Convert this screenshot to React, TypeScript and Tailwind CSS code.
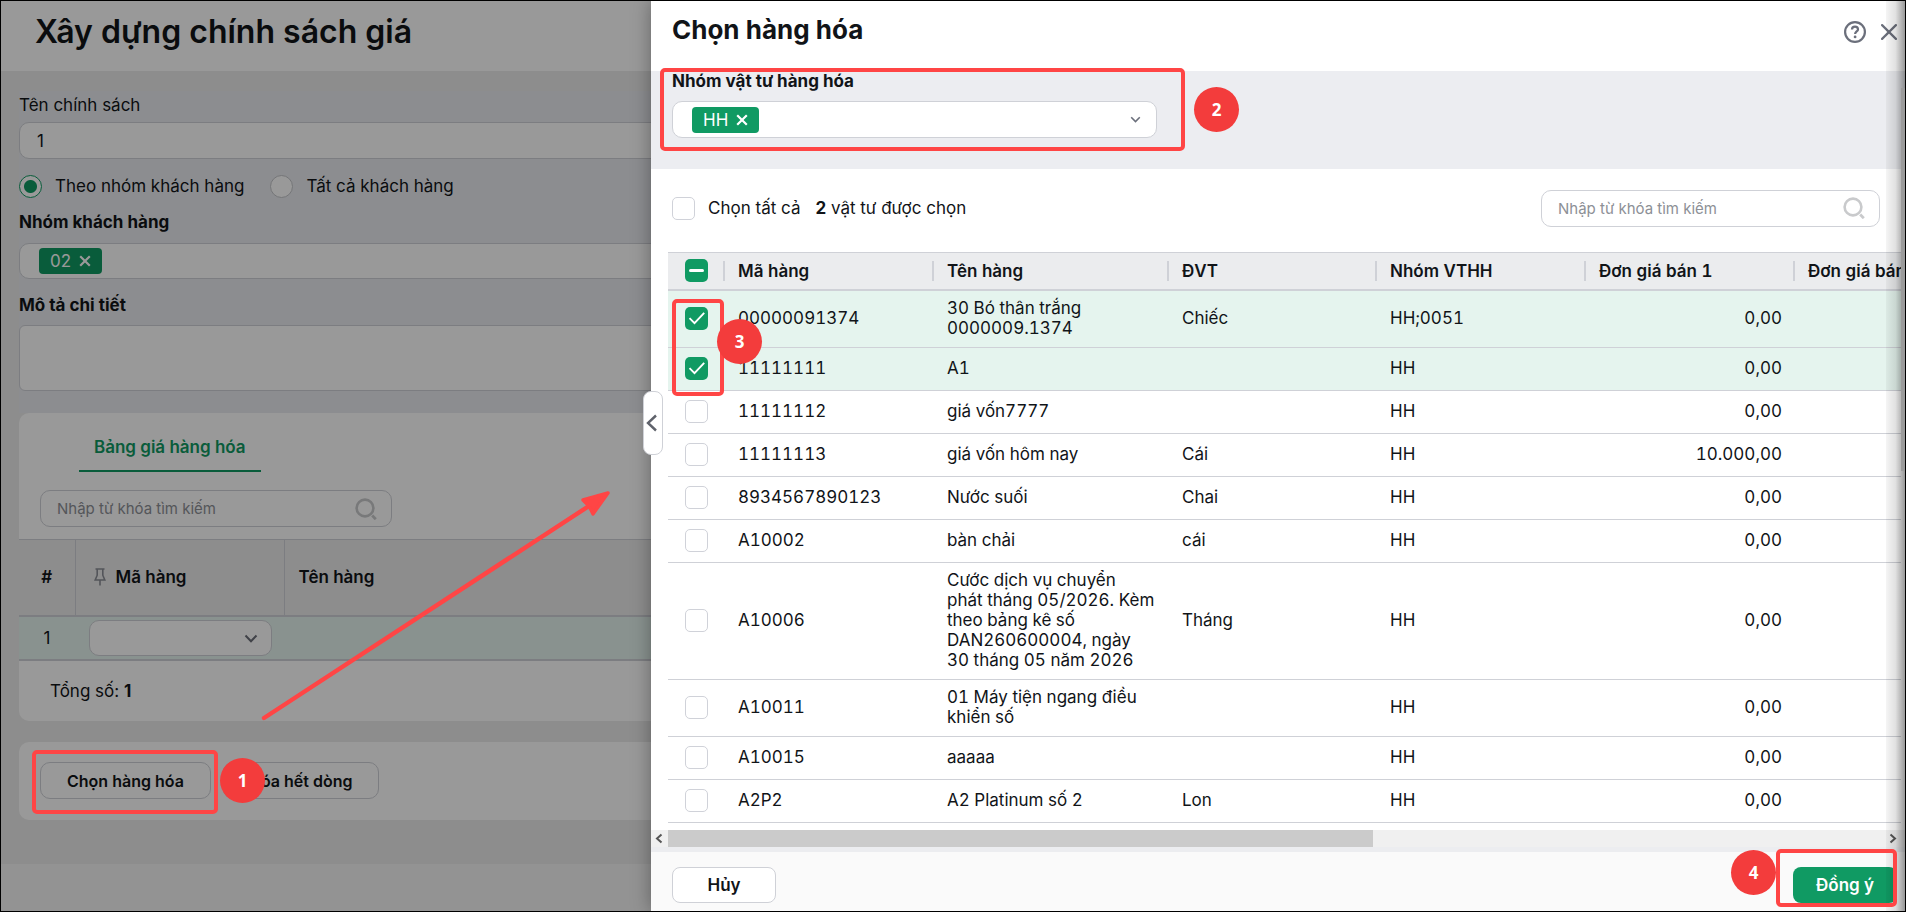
import { useState } from "react";
import type { ReactNode } from "react";
import clsx from "clsx";

type Product = {
  code: string;
  name: string;
  unit: string;
  group: string;
  price: string;
};

const products: Product[] = [
  { code: "00000091374", name: "30 Bó thân trắng 0000009.1374", unit: "Chiếc", group: "HH;0051", price: "0,00" },
  { code: "11111111", name: "A1", unit: "", group: "HH", price: "0,00" },
  { code: "11111112", name: "giá vốn7777", unit: "", group: "HH", price: "0,00" },
  { code: "11111113", name: "giá vốn hôm nay", unit: "Cái", group: "HH", price: "10.000,00" },
  { code: "8934567890123", name: "Nước suối", unit: "Chai", group: "HH", price: "0,00" },
  { code: "A10002", name: "bàn chải", unit: "cái", group: "HH", price: "0,00" },
  {
    code: "A10006",
    name: "Cước dịch vụ chuyển phát tháng 05/2026. Kèm theo bảng kê số DAN260600004, ngày 30 tháng 05 năm 2026",
    unit: "Tháng",
    group: "HH",
    price: "0,00",
  },
  { code: "A10011", name: "01 Máy tiện ngang điều khiển số", unit: "", group: "HH", price: "0,00" },
  { code: "A10015", name: "aaaaa", unit: "", group: "HH", price: "0,00" },
  { code: "A2P2", name: "A2 Platinum số 2", unit: "Lon", group: "HH", price: "0,00" },
];

const columns = [
  { title: "Mã hàng", width: "w-[209px]" },
  { title: "Tên hàng", width: "w-[235px]" },
  { title: "ĐVT", width: "w-[208px]" },
  { title: "Nhóm VTHH", width: "w-[209px]" },
  { title: "Đơn giá bán 1", width: "w-[209px]" },
  { title: "Đơn giá bán 2", width: "w-[209px]" },
];

const ChevronDown = ({ className }: { className: string }) => (
  <svg viewBox="0 0 14 9" className={clsx("pointer-events-none", className)} fill="none" stroke="currentColor" strokeWidth="2">
    <path d="M1.5 1.5 7 7.2l5.5-5.7" />
  </svg>
);

const SearchIcon = () => (
  <svg viewBox="0 0 22 22" className="size-[22px] shrink-0 text-[#c9cacc]" fill="none" stroke="currentColor" strokeWidth="2.6">
    <circle cx="10" cy="10" r="8.4" />
    <path d="m17.2 17.6 3.6 3.6" strokeWidth="2.8" />
  </svg>
);

const SearchBox = ({ className }: { className?: string }) => (
  <div className={clsx("flex h-[37px] items-center rounded-[10px] border border-[#cfd1d7] bg-white pr-3.5 pl-4", className)}>
    <input
      type="text"
      aria-label="Nhập từ khóa tìm kiếm"
      placeholder="Nhập từ khóa tìm kiếm"
      className="h-full min-w-0 flex-1 bg-transparent text-[15px] outline-none placeholder:text-[#8d9096]"
    />
    <SearchIcon />
  </div>
);

const Tag = ({ children }: { children: ReactNode }) => (
  <span className="flex h-[26px] items-center gap-2 rounded bg-[#109a63] px-[11px] text-white">
    {children}
    <button type="button" aria-label="Xóa">
      <svg viewBox="0 0 12 12" className="size-3" fill="none" stroke="currentColor" strokeWidth="2.2">
        <path d="m1.2 1.2 9.6 9.6M10.8 1.2 1.2 10.8" />
      </svg>
    </button>
  </span>
);

type CheckboxProps = {
  id: string;
  label: string;
  checked: boolean;
  partial?: boolean;
  onChange: () => void;
};

const Checkbox = ({ id, label, checked, partial, onChange }: CheckboxProps) => (
  <span className="relative block size-[23px] shrink-0">
    <input
      id={id}
      type="checkbox"
      aria-label={label}
      checked={checked}
      onChange={onChange}
      className={clsx(
        "block size-full appearance-none rounded-[5px]",
        checked || partial ? "bg-[#109a63]" : "border border-[#d0d2d9] bg-white"
      )}
    />
    {(checked || partial) && (
      <svg viewBox="0 0 23 23" className="pointer-events-none absolute inset-0" fill="none" stroke="white">
        {partial ? (
          <path d="M5.5 11.5h12" strokeWidth="3" strokeLinecap="round" />
        ) : (
          <path d="m4.5 11.2 5 5L19.2 5.8" strokeWidth="1.9" />
        )}
      </svg>
    )}
  </span>
);

const Radio = ({ id, label, defaultChecked }: { id: string; label: string; defaultChecked?: boolean }) => (
  <div className="flex items-center gap-[13px]">
    <input
      id={id}
      type="radio"
      name="scope"
      defaultChecked={defaultChecked}
      className="size-[23px] appearance-none rounded-full border border-[#c2c4c8] bg-white checked:border-[#109a63] checked:bg-[radial-gradient(circle,#109a63_6px,white_7px)]"
    />
    <label htmlFor={id}>{label}</label>
  </div>
);

// Numbered step marker, position comes from className
const Step = ({ n, className }: { n: number; className: string }) => (
  <span
    className={clsx(
      "pointer-events-none absolute flex size-[45px] items-center justify-center rounded-full bg-[#f33c3c] font-['Open_Sans',sans-serif] text-[17px] font-bold text-white",
      className
    )}
  >
    {n}
  </span>
);

const Frame = ({ className }: { className: string }) => (
  <span className={clsx("pointer-events-none absolute rounded-[5px] border-4 border-[#ff4545]", className)} />
);

const PolicyPage = () => (
  <div className="flex h-full flex-col bg-[#ebebeb]">
    <header className="h-[70px] shrink-0 bg-white px-[34px] pt-[11px]">
      <h1 className="text-[32px] leading-10 font-semibold">Xây dựng chính sách giá</h1>
    </header>

    <main className="flex-1 px-[18px] pt-5">
      {/* Form */}
      <div className="bg-[#eaecf0] pt-1 pb-[22px]">
        <label htmlFor="policy-name" className="block h-[27px] leading-5">
          Tên chính sách
        </label>
        <input
          id="policy-name"
          type="text"
          defaultValue="1"
          className="block h-[37px] w-full rounded-[10px] border border-[#cfd1d7] bg-white px-[17px]"
        />

        <div className="flex gap-[26px] pt-[15px]">
          <Radio id="by-group" label="Theo nhóm khách hàng" defaultChecked />
          <Radio id="all-customers" label="Tất cả khách hàng" />
        </div>

        <label htmlFor="customer-group" className="mt-3.5 block leading-5 font-bold">
          Nhóm khách hàng
        </label>
        <div className="mt-[11px] flex h-9 items-center rounded-[10px] border border-[#cfd1d7] bg-white px-[19px]">
          <Tag>02</Tag>
          <input id="customer-group" type="text" className="ml-2 min-w-0 flex-1 outline-none" />
        </div>

        <label htmlFor="description" className="mt-4 block leading-5 font-bold">
          Mô tả chi tiết
        </label>
        <textarea
          id="description"
          className="mt-2.5 block h-[66px] w-full resize-none rounded-md border border-[#cfd1d7] bg-white"
        />
      </div>

      {/* Price table */}
      <section className="rounded-[10px] bg-white pt-[19px]">
        <div className="pl-[60px]">
          <button type="button" className="h-10 border-b-2 border-[#109a63] px-[15px] pb-2 font-semibold text-[#109a63]">
            Bảng giá hàng hóa
          </button>
        </div>
        <SearchBox className="mt-[18px] mb-3 ml-[21px] w-[352px]" />

        <table className="w-full table-fixed text-left">
          <thead>
            <tr className="h-[76px] border-t border-b-2 border-t-[#cfd1d7] border-b-[#cfd1d7] bg-[#ebebeb]">
              <th className="w-14 border-r border-[#cfd1d7] text-center font-semibold">#</th>
              <th className="w-[209px] border-r border-[#cfd1d7] pl-[18px] font-semibold">
                <span className="flex items-center gap-2.5">
                  <svg viewBox="0 0 12 18" className="h-[18px] w-3 text-[#8b8e96]" fill="none" stroke="currentColor" strokeWidth="1.6">
                    <path d="M1.5 1h9M3.2 1v6.2L1.2 12h9.6l-2-4.8V1M6 12v5.6" />
                  </svg>
                  Mã hàng
                </span>
              </th>
              <th className="pl-3.5 font-semibold">Tên hàng</th>
            </tr>
          </thead>
          <tbody>
            <tr className="h-11 border-b-2 border-[#cfd1d7] bg-[#e5f4ee]">
              <td className="text-center">1</td>
              <td className="pl-3.5">
                <span className="relative block w-[183px]">
                  <select aria-label="Mã hàng" className="block h-9 w-full appearance-none rounded-[10px] border border-[#cfd1d7] bg-white px-4" />
                  <ChevronDown className="absolute top-3.5 right-3.5 h-[9px] w-3.5 text-[#6b6e78]" />
                </span>
              </td>
              <td />
            </tr>
          </tbody>
        </table>
        <p className="flex h-[60px] items-center pl-[31px]">
          <span>
            Tổng số: <b>1</b>
          </span>
        </p>
      </section>

      {/* Row actions */}
      <div className="mt-[21px] flex h-[78px] items-center gap-3 rounded-[10px] bg-white px-[21px]">
        <button type="button" className="h-[37px] rounded-[10px] border border-[#cfd1d7] px-[26px] text-base font-semibold">
          Chọn hàng hóa
        </button>
        <button type="button" className="h-[37px] rounded-[10px] border border-[#cfd1d7] px-[26px] text-base font-semibold">
          Xóa hết dòng
        </button>
      </div>
    </main>

    <footer className="h-[47px] shrink-0 bg-[#f5f5f5]" />
  </div>
);

const ProductDrawer = () => {
  const [selected, setSelected] = useState<string[]>(["00000091374", "11111111"]);
  const allSelected = selected.length === products.length;

  const toggle = (code: string) => {
    setSelected(selected.includes(code) ? selected.filter((c) => c !== code) : [...selected, code]);
  };

  const toggleAll = () => {
    setSelected(allSelected ? [] : products.map((p) => p.code));
  };

  return (
    <div role="dialog" aria-label="Chọn hàng hóa" className="absolute inset-y-0 right-0 left-[650px] flex flex-col bg-white shadow-[0_0_18px_rgba(0,0,0,0.35)]">
      <header className="flex h-[70px] shrink-0 items-start justify-between pt-[11px] pr-2 pl-[21px]">
        <h2 className="text-[26px] leading-9 font-bold">Chọn hàng hóa</h2>
        <div className="flex items-center gap-[15px] pt-[9px] text-[#6b6f7b]">
          <button type="button" aria-label="Trợ giúp">
            <svg viewBox="0 0 22 22" className="size-[22px]" fill="none" stroke="currentColor" strokeWidth="2.2">
              <circle cx="11" cy="11" r="9.9" />
              <path d="M8 8.6c0-1.8 1.3-2.9 3-2.9s3 1.1 3 2.7c0 2-2.9 2.2-2.9 4.6" />
              <circle cx="11.1" cy="15.9" r="1.4" fill="currentColor" stroke="none" />
            </svg>
          </button>
          <button type="button" aria-label="Đóng">
            <svg viewBox="0 0 16 16" className="size-4" fill="none" stroke="currentColor" strokeWidth="2.2" strokeLinecap="round">
              <path d="m1.1 1.1 13.8 13.8M14.9 1.1 1.1 14.9" />
            </svg>
          </button>
        </div>
      </header>

      {/* Filter */}
      <div className="h-[98px] shrink-0 bg-[#ecedf1] pl-[21px]">
        <label htmlFor="product-group" className="block leading-5 font-bold">
          Nhóm vật tư hàng hóa
        </label>
        <div className="mt-2.5 flex h-[37px] w-[485px] items-center rounded-[10px] border border-[#cfd1d7] bg-white pr-[15px] pl-[19px]">
          <Tag>HH</Tag>
          <input id="product-group" type="text" className="ml-2 min-w-0 flex-1 outline-none" />
          <ChevronDown className="h-[7px] w-[11px] text-[#6b6f7b]" />
        </div>
      </div>

      {/* Toolbar */}
      <div className="flex h-[83px] shrink-0 items-center justify-between pr-[25px] pb-[5px] pl-[21px]">
        <div className="flex items-center">
          <Checkbox id="select-all" label="Chọn tất cả" checked={allSelected} onChange={toggleAll} />
          <label htmlFor="select-all" className="ml-[13px]">
            Chọn tất cả
          </label>
          <span className="ml-[15px]">
            <b>{selected.length}</b> vật tư được chọn
          </span>
        </div>
        <SearchBox className="w-[339px]" />
      </div>

      {/* Products */}
      <div className="mr-1 ml-[17px] min-h-0 flex-1 overflow-hidden">
        <table className="w-[1335px] table-fixed text-left tabular-nums">
          <thead>
            <tr className="h-[37px] border-t border-b-2 border-t-[#cfd1d7] border-b-[#cfd1d7] bg-[#ebecee]">
              <th className="w-14 pl-[17px]">
                <Checkbox id="page-all" label="Chọn trang" checked={allSelected} partial={!allSelected && selected.length > 0} onChange={toggleAll} />
              </th>
              {columns.map((column) => (
                <th key={column.title} className={clsx("p-0 font-semibold", column.width)}>
                  <div className="-ml-px border-l-2 border-[#cfd1d7] pl-[13px] leading-5">{column.title}</div>
                </th>
              ))}
            </tr>
          </thead>
          <tbody className="leading-5">
            {products.map((p) => {
              const checked = selected.includes(p.code);
              return (
                <tr key={p.code} className={clsx("h-[43px] border-b border-[#cfd1d7]", checked && "bg-[#e5f4ee]")}>
                  <td className="pl-[17px]">
                    <Checkbox id={p.code} label={p.code} checked={checked} onChange={() => toggle(p.code)} />
                  </td>
                  <td className="pb-0.5 pl-3.5">{p.code}</td>
                  <td className="pt-[7px] pr-[13px] pb-[9px] pl-3.5">{p.name}</td>
                  <td className="pb-0.5 pl-3.5">{p.unit}</td>
                  <td className="pb-0.5 pl-3.5">{p.group}</td>
                  <td className="pr-3 pb-0.5 text-right">{p.price}</td>
                  <td />
                </tr>
              );
            })}
          </tbody>
        </table>
      </div>

      {/* Horizontal scrollbar */}
      <div className="flex h-[17px] shrink-0 items-center bg-[#f0f0f0] text-[#555]">
        <svg viewBox="0 0 17 17" className="size-[17px]" fill="none" stroke="currentColor" strokeWidth="2">
          <path d="M10.5 4.5 6 8.5l4.5 4" />
        </svg>
        <div className="h-full flex-1">
          <div className="h-full w-[58%] bg-[#cbcbcb]" />
        </div>
        <svg viewBox="0 0 17 17" className="mr-1 size-[17px]" fill="none" stroke="currentColor" strokeWidth="2">
          <path d="m6.5 4.5 4.5 4-4.5 4" />
        </svg>
      </div>

      <footer className="flex h-16 shrink-0 items-start justify-between border-t-[5px] border-[#ecedf0] bg-[#fafafa] pt-[15px] pr-2 pl-[21px]">
        <button type="button" className="h-9 w-[104px] rounded-lg border border-[#cfd1d7] bg-white font-semibold">
          Hủy
        </button>
        <button type="button" className="h-9 w-[104px] rounded-lg bg-[#109a63] font-semibold text-white">
          Đồng ý
        </button>
      </footer>

      {/* Right edge shade and page scroll thumb */}
      <div className="pointer-events-none absolute inset-y-0 right-0 w-[19px] bg-linear-to-r from-black/4 via-black/12 to-black/40" />
      <div className="pointer-events-none absolute top-[87px] right-0 h-[383px] w-1 bg-[#9b9b9b]" />

      {/* Collapse handle */}
      <button
        type="button"
        aria-label="Thu gọn"
        className="absolute top-[390px] -left-2 flex h-16 w-5 items-center rounded-lg border border-[#cfd1d7] bg-white pl-0.5 text-[#5f626b]"
      >
        <svg viewBox="0 0 12 18" className="h-[18px] w-3" fill="none" stroke="currentColor" strokeWidth="2.4">
          <path d="m10 1.5-8 7.5 8 7.5" />
        </svg>
      </button>

      <Frame className="top-[67px] left-[9px] h-[83px] w-[525px]" />
      <Step n={2} className="top-[86px] left-[543px]" />
      <Frame className="top-[298px] left-[21px] h-[97px] w-[52px]" />
      <Step n={3} className="top-[318px] left-[66px]" />
      <Frame className="right-2 bottom-1 h-[58px] w-[121px]" />
      <Step n={4} className="right-[129px] bottom-4" />
    </div>
  );
};

const App = () => {
  return (
    <div className="relative h-screen overflow-hidden border border-black font-[Inter,sans-serif] text-[17px] leading-6 text-[#111418]">
      <PolicyPage />
      <div className="absolute inset-0 bg-black/40" />

      {/* Guide marks over the page */}
      <Frame className="top-[749px] left-[31px] h-[64px] w-[186px]" />
      <Step n={1} className="top-[757px] left-[219px]" />
      <svg viewBox="0 0 360 240" className="pointer-events-none absolute top-[484px] left-[255px] h-[240px] w-[360px] text-[#ff4545]">
        <path d="M8 233 336 19" stroke="currentColor" strokeWidth="4.4" strokeLinecap="round" />
        <path d="m352 8-25 7 6 6 4 8Z" fill="currentColor" stroke="currentColor" strokeWidth="3.4" strokeLinejoin="round" />
      </svg>

      <ProductDrawer />
    </div>
  );
};

export default App;
